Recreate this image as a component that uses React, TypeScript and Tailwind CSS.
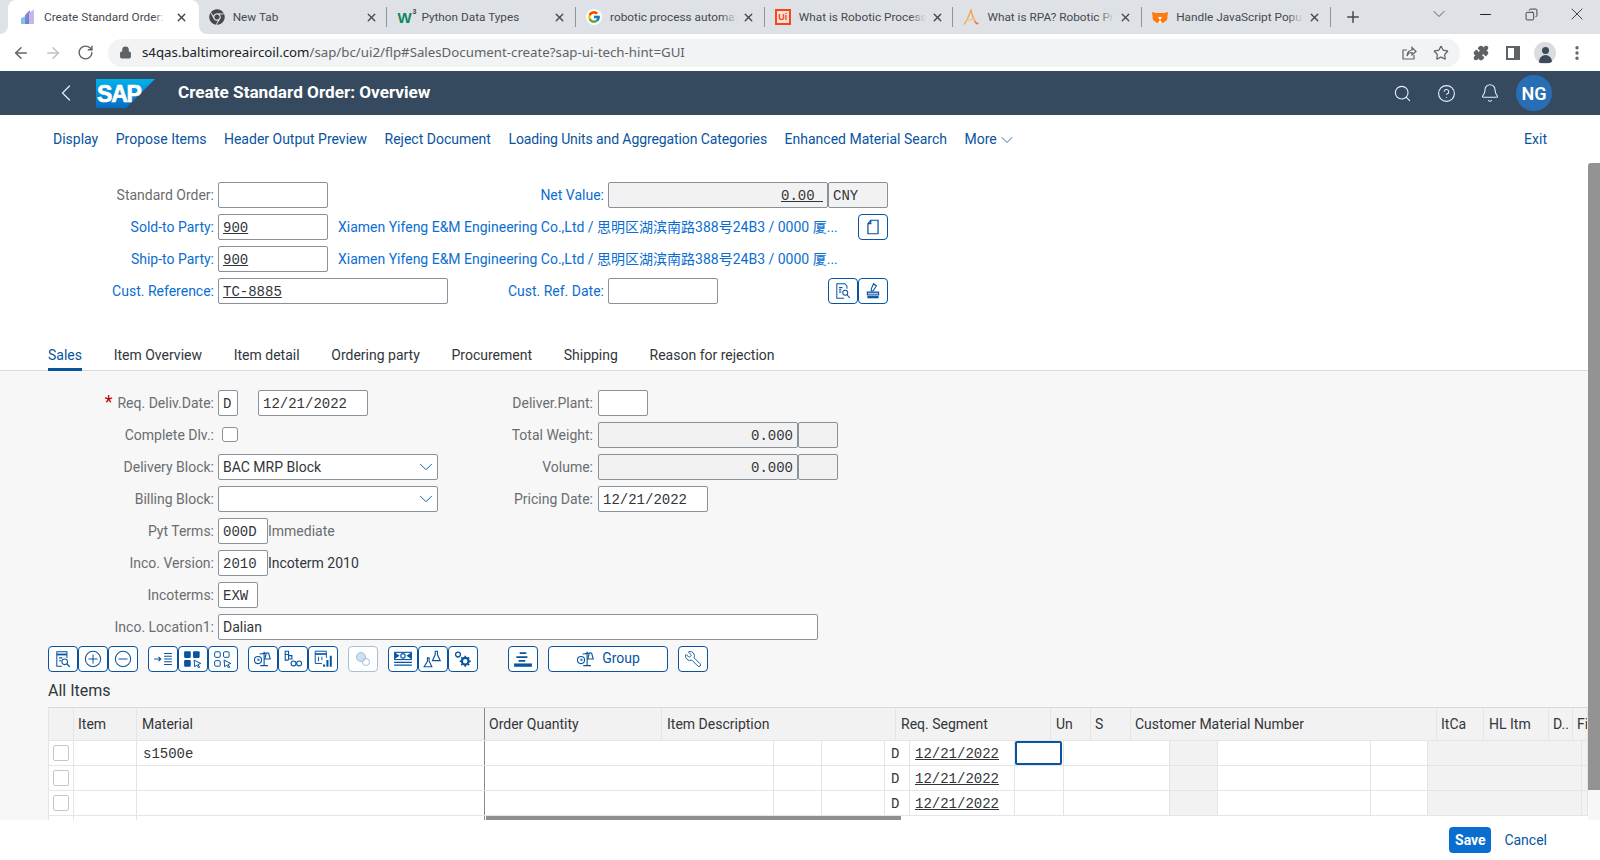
import type { ReactNode } from "react";
import { ArrowLeft, ArrowRight, ChevronDown, ChevronLeft, Copy, EllipsisVertical, Lock, Minus, Plus, Puzzle, RotateCw, Star, X, Search, Bell, CircleHelp, Wrench } from "lucide-react";
import { FaChrome } from "react-icons/fa";
import { FcGoogle } from "react-icons/fc";

function Favicon({ kind }: { kind: string }) {
    if (kind === "sap") {
        return (
            <svg viewBox="0 0 16 16" className="w-4 h-4">
                <defs>
                    <linearGradient id="petal" x1="0" y1="0" x2="1" y2="1">
                        <stop offset="0" stopColor="#a78bda" />
                        <stop offset="1" stopColor="#5b7bd0" />
                    </linearGradient>
                </defs>
                <path d="M1 15V9l5-2v8z" fill="#7fc4e8" />
                <path d="M5 15V6l5-5v14z" fill="url(#petal)" />
                <path d="M9 15V4l5-3.500v14.500z" fill="#c8b5ea" />
            </svg>
        );
    }
    if (kind === "chrome") return <FaChrome className="w-4 h-4 text-[#45494f]" />;
    if (kind === "w3") {
        return (
            <span className="relative w-4 h-4 flex items-center font-['Liberation_Sans',sans-serif] font-bold text-[15px] leading-none text-[#0a8a5c]">
                W<span className="absolute -top-px right-[-3px] text-[7px] text-[#444]">3</span>
            </span>
        );
    }
    if (kind === "google") {
        return (
            <span className="w-4 h-4 rounded-full bg-white flex items-center justify-center">
                <FcGoogle className="w-[14px] h-[14px]" />
            </span>
        );
    }
    if (kind === "ui") {
        return (
            <span className="w-4 h-4 bg-[#fa4616] flex items-center justify-center">
                <span className="w-3 h-3 bg-[#f5e0d8] flex items-center justify-center text-[9px] font-bold leading-none text-[#fa4616] font-['Liberation_Sans',sans-serif]">Ui</span>
            </span>
        );
    }
    if (kind === "a") {
        return (
            <svg viewBox="0 0 16 16" className="w-4 h-4" fill="none" strokeWidth="1.3" strokeLinecap="round">
                <path d="M1.500 15C5 10 6.500 5 8 1c1 5 3 11 6 14" stroke="#f5a04a" />
                <path d="M3.500 11c3 .5 6-.5 8.500-1" stroke="#f9c27a" />
                <path d="M12 13c1 1.500 2 2 3 1" stroke="#ef6a5a" />
            </svg>
        );
    }
    return (
        <svg viewBox="0 0 16 16" className="w-4 h-4" fill="#ff7a0d">
            <path d="M0 3l4 1h8l4-1-1 8-4 3H5l-4-3z" />
            <path d="M6 8h4l-2 3z" fill="#fff" />
            <path d="M6 14l2-3 2 3z" fill="#fff" />
        </svg>
    );
}

const tabs = [
    { kind: "chrome", title: "New Tab" },
    { kind: "w3", title: "Python Data Types" },
    { kind: "google", title: "robotic process automation" },
    { kind: "ui", title: "What is Robotic Process Automation" },
    { kind: "a", title: "What is RPA? Robotic Process" },
    { kind: "fox", title: "Handle JavaScript Popups" },
];

function ChromeTab({ kind, title, active }: { kind: string; title: string; active?: boolean }) {
    return (
        <div className={active ? "relative flex items-center h-[34px] w-[190.700px] -ml-[2px] pl-[12px] bg-white rounded-t-[8px]" : "relative flex items-center h-[34px] w-[188.700px] pl-[10px]"}>
            {active && (
                <>
                    <div className="absolute -left-2 bottom-0 w-2 h-2 bg-white"><div className="w-2 h-2 bg-[#dee1e6] rounded-br-[8px]" /></div>
                    <div className="absolute -right-2 bottom-0 w-2 h-2 bg-white z-10"><div className="w-2 h-2 bg-[#dee1e6] rounded-bl-[8px]" /></div>
                </>
            )}
            <Favicon kind={kind} />
            <div className={active ? "relative ml-[8px] w-[122px] overflow-hidden whitespace-nowrap pt-px text-[11.800px] text-[#45494f] font-['Roboto',sans-serif]" : "relative ml-[8px] w-[127px] overflow-hidden whitespace-nowrap pt-px text-[11.800px] text-[#45494f] font-['Roboto',sans-serif]"}>
                {title}
                <div className={active ? "absolute right-0 top-0 bottom-0 w-3 bg-gradient-to-r from-transparent to-white" : "absolute right-0 top-0 bottom-0 w-4 bg-gradient-to-r from-transparent to-[#dee1e6]"} />
            </div>
            <X className={active ? "ml-[9px] w-[13px] h-[13px] text-[#45494f]" : "ml-[5px] w-[13px] h-[13px] text-[#45494f]"} strokeWidth={2.500} />
            {!active && <div className="absolute right-0 top-[7px] bottom-[7px] w-px bg-[#8f9399]" />}
        </div>
    );
}

function ChromeBar() {
    return (
        <div className="font-['Noto_Sans',sans-serif]">
            <div className="flex h-[34px] pl-[10px] bg-[#dee1e6]">
                <ChromeTab kind="sap" title="Create Standard Order: Overview" active />
                {tabs.map((t) => <ChromeTab key={t.title} kind={t.kind} title={t.title} />)}
                <div className="ml-[6px] w-8 flex items-center justify-center">
                    <Plus className="w-[18px] h-[18px] text-[#45494f]" strokeWidth={2} />
                </div>
                <div className="ml-auto flex">
                    <div className="w-[46px] h-[28px] flex items-center justify-center"><ChevronDown className="w-5 h-5 text-[#3c4043]" strokeWidth={1} /></div>
                    <div className="w-[46px] h-[28px] flex items-center justify-center"><Minus className="w-[17px] h-[17px] text-[#222]" strokeWidth={1.500} /></div>
                    <div className="w-[46px] h-[28px] flex items-center justify-center"><Copy className="w-[13px] h-[13px] text-[#222] -scale-x-100" strokeWidth={1.500} /></div>
                    <div className="w-[46px] h-[28px] flex items-center justify-center"><X className="w-5 h-5 text-[#222]" strokeWidth={1} /></div>
                </div>
            </div>
            <div className="flex items-center h-[37px] pl-[5px] bg-white">
                <div className="w-8 flex justify-center"><ArrowLeft className="w-[18px] h-[18px] text-[#5f6368]" strokeWidth={2} /></div>
                <div className="w-8 flex justify-center"><ArrowRight className="w-[18px] h-[18px] text-[#bdc1c6]" strokeWidth={2} /></div>
                <div className="w-8 flex justify-center"><RotateCw className="w-[17px] h-[17px] text-[#5f6368]" strokeWidth={2} /></div>
                <div className="ml-[7px] flex items-center w-[1352px] h-[28px] rounded-full bg-[#f1f3f4] pl-[11px]">
                    <Lock className="w-[13px] h-[13px] text-[#5f6368] fill-[#5f6368]" strokeWidth={2} />
                    <span className="ml-[10px] text-[13.280px] whitespace-nowrap text-[#5f6368]"><span className="text-[#202124]">s4qas.baltimoreaircoil.com</span>/sap/bc/ui2/flp#SalesDocument-create?sap-ui-tech-hint=GUI</span>
                    <div className="ml-auto flex mr-[3px]">
                        <div className="w-8 flex justify-center">
                            <svg viewBox="0 0 16 16" className="w-4 h-4" fill="none" stroke="#5f6368" strokeWidth="1.200"><path d="M13 10v4H2V5h4" /><path d="M6 11c0-4 3-6 5-6V2.500L15 6.500 11 10V7.500c-2 0-4 1-5 3.500z" /></svg>
                        </div>
                        <div className="w-8 flex justify-center"><Star className="w-4 h-4 text-[#5f6368]" strokeWidth={1.800} /></div>
                    </div>
                </div>
                <div className="ml-[5px] w-8 flex justify-center"><Puzzle className="w-4 h-4 text-[#5f6368] fill-[#5f6368]" /></div>
                <div className="w-8 flex justify-center">
                    <div className="w-[14px] h-[14px] border-2 border-[#5f6368] border-r-[6px]" />
                </div>
                <div className="w-8 flex justify-center">
                    <div className="relative w-[22px] h-[22px] rounded-full bg-[#dadce0] overflow-hidden">
                        <div className="absolute left-[7.500px] top-[5px] w-[7px] h-[7px] rounded-full bg-[#3c4a5c]" />
                        <div className="absolute left-[4.500px] top-[13px] w-[13px] h-[8px] rounded-t-full bg-[#3c4a5c]" />
                    </div>
                </div>
                <div className="w-8 flex justify-center"><EllipsisVertical className="w-[18px] h-[18px] text-[#5f6368]" strokeWidth={2.500} /></div>
            </div>
        </div>
    );
}

function SapLogo() {
    return (
        <svg viewBox="0 0 59 29" className="w-[59px] h-[29px]">
            <defs>
                <linearGradient id="sapblue" x1="0" y1="0" x2="0" y2="1">
                    <stop offset="0" stopColor="#00b1eb" />
                    <stop offset="1" stopColor="#0a6cc4" />
                </linearGradient>
            </defs>
            <polygon points="0,0 59,0 30,29 0,29" fill="url(#sapblue)" />
            <text x="1" y="23" fontFamily="Liberation Sans" fontWeight="bold" fontSize="23" letterSpacing="-1.200" fill="#fff" stroke="#fff" strokeWidth=".7">SAP</text>
        </svg>
    );
}

function ShellBar() {
    return (
        <div className="flex items-center h-[44px] bg-[#354a5f] text-white">
            <ChevronLeft className="ml-[52px] w-7 h-7 text-[#d1e8ff]" strokeWidth={1.200} />
            <div className="ml-[16px]"><SapLogo /></div>
            <span className="ml-[23px] text-[17.150px] font-bold">Create Standard Order: Overview</span>
            <div className="ml-auto flex items-center pr-[44px]">
                <div className="w-[44px] flex justify-center"><Search className="w-[19px] h-[19px] text-[#e3f0ff]" strokeWidth={1.400} /></div>
                <div className="w-[44px] flex justify-center"><CircleHelp className="w-[19px] h-[19px] text-[#e3f0ff]" strokeWidth={1.400} /></div>
                <div className="w-[44px] flex justify-center"><Bell className="w-5 h-5 text-[#e3f0ff]" strokeWidth={1.300} /></div>
                <div className="w-[44px] flex justify-center">
                    <div className="w-9 h-9 rounded-full bg-[#286eb4] flex items-center justify-center text-[18px] font-semibold">NG</div>
                </div>
            </div>
        </div>
    );
}

const links = ["Display", "Propose Items", "Header Output Preview", "Reject Document", "Loading Units and Aggregation Categories", "Enhanced Material Search"];

function Toolbar() {
    return (
        <div className="flex items-center h-[48px] pt-[2px] pl-[53px] pr-[53px] gap-[17.500px] text-[14px] text-[#0854a0] bg-white">
            {links.map((l) => <span key={l} className={l.startsWith("Loading") ? "whitespace-nowrap tracking-[-0.1px]" : "whitespace-nowrap"}>{l}</span>)}
            <span className="flex items-center">More <ChevronDown className="w-5 h-5" strokeWidth={1} /></span>
            <span className="ml-auto">Exit</span>
        </div>
    );
}

function Field({ value, under, gray, right, className }: { value?: string; under?: boolean; gray?: boolean; right?: boolean; className: string }) {
    return (
        <div className={`${className} h-[26px] shrink-0 flex items-center border border-[#89919a] rounded-[2px] px-1 font-['Liberation_Mono',monospace] text-[14px] text-[#32363a] whitespace-pre ${gray ? "bg-[#f2f2f2]" : "bg-white"} ${right ? "justify-end" : ""}`}>
            <span className={under ? "underline pt-[4px]" : "pt-[4px]"}>{value}</span>
        </div>
    );
}

function Label({ children, link, className }: { children: ReactNode; link?: boolean; className?: string }) {
    return <span className={`whitespace-nowrap pt-[2px] text-[14px] ${link ? "text-[#0a6ed1]" : "text-[#6a6d70]"} ${className ?? ""}`}>{children}</span>;
}

function Btn({ children, disabled, className }: { children: ReactNode; disabled?: boolean; className?: string }) {
    return (
        <div className={`${className ?? "w-[30px]"} h-[26px] flex items-center justify-center rounded-[4px] border bg-white text-[#0854a0] ${disabled ? "border-[#a3c0dc]" : "border-[#0854a0]"}`}>
            {children}
        </div>
    );
}

function HeaderForm() {
    const partner = "Xiamen Yifeng E&M Engineering Co.,Ltd / 思明区湖滨南路388号24B3 / 0000 厦...";
    return (
        <div className="bg-white pt-[19px] flex flex-col gap-[6px]">
            <div className="flex h-[26px] items-center">
                <Label className="w-[214px] text-right">Standard Order:</Label>
                <div className="ml-1 flex items-center w-[386px]">
                    <Field className="w-[110px]" />
                    <Label link className="ml-auto">Net Value:</Label>
                </div>
                <Field className="ml-1 w-[220px]" value="0.00 " under gray right />
                <Field className="w-[60px]" value="CNY" gray />
            </div>
            <div className="flex h-[26px] items-center">
                <Label link className="w-[214px] text-right">Sold-to Party:</Label>
                <Field className="ml-1 w-[110px]" value="900" under />
                <Label link className="ml-[10px] w-[510px]">{partner}</Label>
                <Btn className="ml-[10px] w-[30px]">
                    <svg viewBox="0 0 16 16" className="w-[18px] h-[18px]" fill="none" stroke="currentColor" strokeWidth="1.100"><path d="M6 2h6.500v12h-9V5z" /><path d="M6 2v3H3.500" /></svg>
                </Btn>
            </div>
            <div className="flex h-[26px] items-center">
                <Label link className="w-[214px] text-right">Ship-to Party:</Label>
                <Field className="ml-1 w-[110px]" value="900" under />
                <Label link className="ml-[10px]">{partner}</Label>
            </div>
            <div className="flex h-[26px] items-center">
                <Label link className="w-[214px] text-right">Cust. Reference:</Label>
                <div className="ml-1 flex items-center w-[386px]">
                    <Field className="w-[230px]" value="TC-8885" under />
                    <Label link className="ml-auto">Cust. Ref. Date:</Label>
                </div>
                <Field className="ml-1 w-[110px]" />
                <div className="ml-[110px] flex">
                    <Btn>
                        <svg viewBox="0 0 16 16" className="w-[18px] h-[18px]" fill="none" stroke="currentColor" strokeWidth=".9"><path d="M9 14.500H2.500v-13h7l2 2v2.500" /><path d="M4.500 5h3M4.500 7h2M4.500 9h2" /><circle cx="10" cy="9.500" r="2.200" /><path d="M11.500 11.200l2.500 3" /></svg>
                    </Btn>
                    <Btn>
                        <svg viewBox="0 0 16 16" className="w-[18px] h-[18px]" fill="none" stroke="currentColor" strokeWidth="1"><path d="M8.500 1.500l2.500 2-3 4.500H6.500V6z" /><path d="M3 9h10v2.500H3z" fill="currentColor" fillOpacity=".35" /><path d="M3 13.500h10" strokeWidth="2" /></svg>
                    </Btn>
                </div>
            </div>
        </div>
    );
}

const salesTabs = ["Item Overview", "Item detail", "Ordering party", "Procurement", "Shipping", "Reason for rejection"];

function Tabs() {
    return (
        <div className="bg-white pt-[28px]">
            <div className="flex h-[39px] pl-[48px] gap-[31.700px] border-b border-[#d9d9d9] text-[14px] text-[#32363a]">
                <div className="h-[39px] flex items-center border-b-[3px] border-[#0854a0] pt-[11px] text-[#0854a0]">Sales</div>
                {salesTabs.map((t) => <div key={t} className="h-[39px] flex items-center pt-2">{t}</div>)}
            </div>
        </div>
    );
}

function SalesForm() {
    return (
        <div className="pt-[19px] flex flex-col gap-[6px]">
            <div className="flex h-[26px] items-center">
                <Label className="w-[214px] text-right"><span className="text-[#bb0000] text-[18px] leading-none mr-[5px]">*</span>Req. Deliv.Date:</Label>
                <Field className="ml-1 w-5" value="D" />
                <Field className="ml-[20px] w-[110px]" value="12/21/2022" />
                <Label className="w-[225px] text-right">Deliver.Plant:</Label>
                <Field className="ml-[5px] w-[50px]" />
            </div>
            <div className="flex h-[26px] items-center">
                <Label className="w-[214px] text-right">Complete Dlv.:</Label>
                <div className="ml-[8px] w-4 h-[15px] border border-[#89919a] rounded-[3px] bg-white" />
                <Label className="w-[355px] text-right">Total Weight:</Label>
                <Field className="ml-[5px] w-[200px]" value="0.000" gray right />
                <Field className="w-10" gray />
            </div>
            <div className="flex h-[26px] items-center">
                <Label className="w-[214px] text-right">Delivery Block:</Label>
                <SelectBox value="BAC MRP Block" />
                <Label className="w-[155px] text-right">Volume:</Label>
                <Field className="ml-[5px] w-[200px]" value="0.000" gray right />
                <Field className="w-10" gray />
            </div>
            <div className="flex h-[26px] items-center">
                <Label className="w-[214px] text-right">Billing Block:</Label>
                <SelectBox />
                <Label className="w-[155px] text-right">Pricing Date:</Label>
                <Field className="ml-[5px] w-[110px]" value="12/21/2022" />
            </div>
            <div className="flex h-[26px] items-center">
                <Label className="w-[214px] text-right">Pyt Terms:</Label>
                <Field className="ml-1 w-[50px]" value="000D" />
                <Label>Immediate</Label>
            </div>
            <div className="flex h-[26px] items-center">
                <Label className="w-[214px] text-right">Inco. Version:</Label>
                <Field className="ml-1 w-[50px]" value="2010" />
                <span className="pt-[2px] text-[14px] text-[#32363a]">Incoterm 2010</span>
            </div>
            <div className="flex h-[26px] items-center">
                <Label className="w-[214px] text-right">Incoterms:</Label>
                <Field className="ml-1 w-10" value="EXW" />
            </div>
            <div className="flex h-[26px] items-center">
                <Label className="w-[214px] text-right">Inco. Location1:</Label>
                <div className="ml-1 w-[600px] h-[26px] flex items-center border border-[#89919a] rounded-[2px] px-1 pt-[2px] bg-white text-[14px] text-[#32363a]">Dalian</div>
            </div>
        </div>
    );
}

function SelectBox({ value }: { value?: string }) {
    return (
        <div className="ml-1 w-[220px] h-[26px] flex items-center justify-between border border-[#89919a] rounded-[2px] pl-1 bg-white text-[14px] text-[#32363a]">
            <span className="pt-[2px]">{value}</span>
            <ChevronDown className="w-[22px] h-[22px] text-[#0854a0]" strokeWidth={1} />
        </div>
    );
}

function ScaleIcon() {
    return (
        <svg viewBox="0 0 18 16" className="w-5 h-[18px]" fill="none" stroke="currentColor" strokeWidth="1">
            <circle cx="4.500" cy="9" r="3.200" />
            <path d="M4.500 7.500V9h1.500" />
            <path d="M10 1.500v12M6.500 14h7M6 3.500l8-1" />
            <path d="M12 3l-1.500 5h5L14 2.500" />
        </svg>
    );
}

function ActionBar() {
    return (
        <div className="flex mt-[6px] pl-[48px] gap-[10px]">
            <div className="flex">
                <Btn>
                    <svg viewBox="0 0 16 16" className="w-[18px] h-[18px]" fill="none" stroke="currentColor" strokeWidth=".9"><path d="M7 14.500H2.500v-13h9V7" /><path d="M2.500 4h9" strokeWidth="1.600" /><path d="M4.500 7h3M4.500 9.500h2" /><circle cx="9.500" cy="10.500" r="2.500" /><path d="M11.300 12.300l2.700 2.700" strokeWidth="1.200" /></svg>
                </Btn>
                <Btn>
                    <svg viewBox="0 0 16 16" className="w-[18px] h-[18px]" fill="none" stroke="currentColor" strokeWidth=".9"><circle cx="8" cy="8" r="6.800" /><path d="M8 4v8M4 8h8" /></svg>
                </Btn>
                <Btn>
                    <svg viewBox="0 0 16 16" className="w-[18px] h-[18px]" fill="none" stroke="currentColor" strokeWidth=".9"><circle cx="8" cy="8" r="6.800" /><path d="M4 8h8" /></svg>
                </Btn>
            </div>
            <div className="flex">
                <Btn>
                    <svg viewBox="0 0 18 16" className="w-5 h-[18px]" fill="none" stroke="currentColor" strokeWidth="1"><path d="M1 8h6M5 6l2 2-2 2" /><path d="M10 3h7M10 5.500h7M10 8h7M10 10.500h7M10 13h7" /></svg>
                </Btn>
                <Btn>
                    <svg viewBox="0 0 18 16" className="w-5 h-[18px]" fill="currentColor"><rect x="1" y="1" width="6" height="6" rx="1" /><rect x="9" y="1" width="6" height="6" rx="1" /><rect x="1" y="9" width="6" height="6" rx="1" /><path d="M10 9l6 3-2.500 1 1.500 2.500-1 .500-1.500-2.500-2 1.500z" fill="none" stroke="currentColor" strokeWidth=".9" /></svg>
                </Btn>
                <Btn>
                    <svg viewBox="0 0 18 16" className="w-5 h-[18px]" fill="none" stroke="currentColor" strokeWidth=".9"><rect x="1.500" y="1.500" width="5" height="5" rx="1" /><rect x="9.500" y="1.500" width="5" height="5" rx="1" /><rect x="1.500" y="9.500" width="5" height="5" rx="1" /><path d="M10 9l6 3-2.500 1 1.500 2.500-1 .500-1.500-2.500-2 1.500z" /></svg>
                </Btn>
            </div>
            <div className="flex">
                <Btn><ScaleIcon /></Btn>
                <Btn>
                    <svg viewBox="0 0 18 16" className="w-5 h-[18px]" fill="none" stroke="currentColor" strokeWidth="1"><path d="M2 1h3v3H2zM5 5h3v3H5zM2 4v5h3" /><circle cx="9.500" cy="12" r="2.200" /><circle cx="14.500" cy="12" r="2.200" /><path d="M11.700 12h.6" /></svg>
                </Btn>
                <Btn>
                    <svg viewBox="0 0 18 16" className="w-5 h-[18px]" fill="none" stroke="currentColor" strokeWidth=".9"><path d="M8 12H2V1h10v6" /><path d="M2 3.500h10" strokeWidth="1.500" /><path d="M5 6v4M8 6v3" /><path d="M10 15v-2M13 15V9M16 15V5" strokeWidth="1.800" /></svg>
                </Btn>
            </div>
            <Btn disabled>
                <svg viewBox="0 0 16 16" className="w-4 h-4" fill="none" stroke="#a3c0dc" strokeWidth="1"><circle cx="6" cy="6" r="4.500" fill="#a3c0dc" fillOpacity=".5" /><circle cx="11" cy="11" r="3.500" /></svg>
            </Btn>
            <div className="flex">
                <Btn>
                    <svg viewBox="0 0 18 16" className="w-5 h-[18px]" fill="none" stroke="currentColor" strokeWidth="1"><rect x="1.500" y="2" width="15" height="6.500" /><path d="M2 3l3 2-3 2zM16 3l-3 2 3 2z" fill="currentColor" /><circle cx="9" cy="5.200" r="2" /><path d="M1 11h16M1 13.500h16" /></svg>
                </Btn>
                <Btn>
                    <svg viewBox="0 0 18 16" className="w-5 h-[18px]" fill="none" stroke="currentColor" strokeWidth="1"><path d="M4 7v3l-3 5h7L5.500 10V7z" /><path d="M11 1v3L8.500 9.500h7L13 4V1z" /></svg>
                </Btn>
                <Btn>
                    <svg viewBox="0 0 18 16" className="w-5 h-[18px]" fill="none" stroke="currentColor"><circle cx="4.500" cy="4" r="2.200" strokeWidth="1.200" /><circle cx="11" cy="10" r="3" strokeWidth="2" /><path d="M11 5v1.500M11 13.500V15M6 10h1.500M14.500 10H16M7.500 6.500l1 1M13.500 12.500l1 1M14.500 6.500l-1 1M8.500 12.500l-1 1" strokeWidth="1.500" /></svg>
                </Btn>
            </div>
            <div className="ml-5">
                <Btn>
                    <svg viewBox="0 0 18 16" className="w-5 h-[18px]" fill="currentColor"><path d="M6 2h6v1.500H6zM3 5.500h10V7H3zM5 9h6v1.500H5z" /><path d="M1 12h16v3H1z" /></svg>
                </Btn>
            </div>
            <Btn className="w-[120px]">
                <div className="flex items-center gap-[6px] text-[14px] text-[#0854a0]"><ScaleIcon /><span>Group</span></div>
            </Btn>
            <Btn><Wrench className="w-[18px] h-[18px] -scale-x-100" strokeWidth={1.200} /></Btn>
        </div>
    );
}

const headCols = [
    { w: "w-[177px] pl-[4px]", t: "Order Quantity" },
    { w: "w-[234px] pl-[5px]", t: "Item Description" },
    { w: "w-[155px] pl-[5px]", t: "Req. Segment" },
    { w: "w-[40px] pl-[5px]", t: "Un" },
    { w: "w-[40px] pl-[4px]", t: "S" },
    { w: "w-[306px] pl-[4px]", t: "Customer Material Number" },
    { w: "w-[47px] pl-[4px]", t: "ItCa" },
    { w: "w-[65px] pl-[5px]", t: "HL Itm" },
    { w: "w-[24px] pl-[4px]", t: "D.." },
    { w: "w-[15px] pl-[4px]", t: "Fi" },
];

const bodyCols = ["w-[289px]", "w-[48px]", "w-[63px]", "w-[25px]", "w-[105px]", "w-[49px]", "w-[106px]", "w-[48px] bg-[#f2f2f2]", "w-[153px]", "w-[57px]", "w-[154px] bg-[#f2f2f2]", "w-[6px] bg-[#f2f2f2]"];

function ItemRow({ material, focus }: { material?: string; focus?: boolean }) {
    return (
        <div className="flex h-[25px] border-b border-[#e5e5e5] bg-white">
            <div className="w-[26px] shrink-0 flex items-center pl-[4px] border-x border-[#e5e5e5]">
                <div className="w-4 h-4 bg-white border border-[#c4c8cc] rounded-[2px]" />
            </div>
            <div className="w-[63px] shrink-0 border-r border-[#e5e5e5]" />
            <div className="w-[348px] shrink-0 border-r border-[#8a8a8a] pl-[6px] flex items-center font-['Liberation_Mono',monospace] text-[14px] text-[#32363a]">
                <span className="pt-[4px]">{material}</span>
            </div>
            {bodyCols.map((c, i) => (
                <div key={i} className={`${c} shrink-0 border-r border-[#e5e5e5] flex items-center font-['Liberation_Mono',monospace] text-[14px] text-[#32363a]`}>
                    {i === 3 && <span className="pl-[6px] pt-[4px]">D</span>}
                    {i === 4 && <span className="ml-[5px] pt-[4px] underline">12/21/2022</span>}
                    {i === 5 && focus && <div className="w-[47px] h-[24px] border-2 border-[#0854a0] rounded-[2px] bg-white" />}
                </div>
            ))}
        </div>
    );
}

function ItemsTable() {
    return (
        <div className="ml-[48px] w-[1540px] border-t border-[#d9d9d9] overflow-hidden text-[14px] text-[#32363a]">
            <div className="flex h-[33px] bg-[#f2f2f2] border-b border-[#e5e5e5]">
                <div className="w-[26px] shrink-0 border-x border-[#e5e5e5]" />
                <div className="w-[63px] shrink-0 pl-[4px] pt-px flex items-center border-r border-[#e5e5e5]">Item</div>
                <div className="w-[348px] shrink-0 pl-[5px] pt-px flex items-center border-r border-[#8a8a8a]">Material</div>
                {headCols.map((c) => (
                    <div key={c.t} className={`${c.w} shrink-0 pt-px flex items-center border-r border-[#e5e5e5] whitespace-nowrap overflow-hidden`}>{c.t}</div>
                ))}
            </div>
            <ItemRow material="s1500e" focus />
            <ItemRow />
            <ItemRow />
            <div className="flex h-[5px] bg-white">
                <div className="w-[26px] border-x border-[#e5e5e5]" />
                <div className="w-[63px] border-r border-[#e5e5e5]" />
                <div className="w-[348px] border-r border-[#8a8a8a]" />
                <div className="ml-px h-1 w-[415px] bg-[#8f8f8f]" />
            </div>
        </div>
    );
}

export default function App() {
    return (
        <div className="w-[1600px] h-[860px] overflow-hidden flex flex-col bg-white font-['Roboto','Noto_Sans_CJK_SC',sans-serif]">
            <ChromeBar />
            <ShellBar />
            <div className="relative h-[705px] overflow-hidden flex flex-col bg-[#f7f7f7]">
                <Toolbar />
                <HeaderForm />
                <Tabs />
                <SalesForm />
                <ActionBar />
                <div className="h-[35px] pt-[7px] pl-[48px] text-[16px] text-[#32363a]">All Items</div>
                <ItemsTable />
                <div className="absolute right-0 top-[48px] h-[627px] w-3 bg-[#939393] rounded-tl-[3px]" />
            </div>
            <div className="h-[40px] flex items-center justify-end pr-[53px] gap-[13px] text-[14px]">
                <div className="w-[42px] h-[26px] rounded-[4px] bg-[#0a6ed1] text-white font-bold flex items-center justify-center">Save</div>
                <span className="text-[#0854a0]">Cancel</span>
            </div>
        </div>
    );
}
